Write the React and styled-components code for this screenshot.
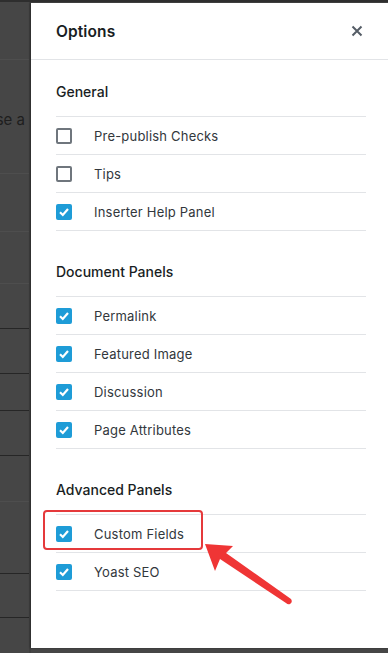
import React from 'react';
import styled, { createGlobalStyle } from 'styled-components';

const GlobalStyle = createGlobalStyle`
  html, body {
    margin: 0;
    padding: 0;
    background: #464646;
    font-family: Inter, "Noto Sans", Arial, sans-serif;
    -webkit-font-smoothing: antialiased;
  }
`;

const bgRows = [
  { h: 58, line: 'faint' },
  { h: 114, line: 'faint', text: 'Choose a' },
  { h: 58, line: 'faint' },
  { h: 52, line: 'faint' },
  { h: 45, line: 'dark' },
  { h: 45, line: 'dark' },
  { h: 37, line: 'dark' },
  { h: 45, line: 'dark' },
  { h: 46, line: 'faint' },
  { h: 72, line: 'dark' },
  { h: 44, line: 'dark' },
  { h: 40, line: 'none' },
];

const sections = [
  {
    title: 'General',
    items: [
      { label: 'Pre-publish Checks', checked: false },
      { label: 'Tips', checked: false },
      { label: 'Inserter Help Panel', checked: true },
    ],
  },
  {
    title: 'Document Panels',
    items: [
      { label: 'Permalink', checked: true },
      { label: 'Featured Image', checked: true },
      { label: 'Discussion', checked: true },
      { label: 'Page Attributes', checked: true },
    ],
  },
  {
    title: 'Advanced Panels',
    items: [
      { label: 'Custom Fields', checked: true },
      { label: 'Yoast SEO', checked: true },
    ],
  },
];

const App = () => {
  return (
    <>
      <GlobalStyle />
      <Page>
        <Backdrop>
          {bgRows.map((r, i) => (
            <BgRow key={i} $line={r.line} style={{ height: r.h }}>
              {r.text && <BgText>{r.text}</BgText>}
            </BgRow>
          ))}
        </Backdrop>
        <Modal>
          <Header>
            <Title>Options</Title>
            <CloseButton aria-label="Close">
              <svg width="12" height="12" viewBox="0 0 12 12">
                <path d="M1.5 1.5 L10.5 10.5 M10.5 1.5 L1.5 10.5" stroke="#555d66" strokeWidth="2" />
              </svg>
            </CloseButton>
          </Header>
          <Body>
            {sections.map((s) => (
              <Section key={s.title}>
                <SectionTitle>{s.title}</SectionTitle>
                <List>
                  {s.items.map((it) => (
                    <Row key={it.label}>
                      <Box $checked={it.checked}>
                        {it.checked && (
                          <svg width="12" height="12" viewBox="0 0 12 12">
                            <path d="M2 6.3 L4.8 9 L10 3" stroke="#fff" strokeWidth="2.2" fill="none" />
                          </svg>
                        )}
                      </Box>
                      <Label>{it.label}</Label>
                    </Row>
                  ))}
                </List>
              </Section>
            ))}
          </Body>
          <Highlight />
          <Arrow width="100" height="75" viewBox="0 0 100 75">
            <path d="M0 0 L28 2 L21 9 L86 55 Q88 58 85 60 Q83 61 81 59 L15 15 L10 27 Z" fill="#ef3535" />
          </Arrow>
        </Modal>
      </Page>
    </>
  );
};

const Page = styled.div`
  position: relative;
  width: 388px;
  height: 653px;
  overflow: hidden;
  background: #464646;
  border-top: 2px solid #2e2e2e;
  box-sizing: border-box;
`;

const Backdrop = styled.div`
  width: 31px;
  display: flex;
  flex-direction: column;
  border-right: 2px solid #3f3f3f;
  box-sizing: border-box;
`;

const BgRow = styled.div`
  display: flex;
  align-items: center;
  justify-content: flex-end;
  overflow: hidden;
  box-sizing: border-box;
  border-bottom: 1px solid
    ${(p) => (p.$line === 'dark' ? '#262626' : p.$line === 'faint' ? '#4e4e4e' : 'transparent')};
`;

const BgText = styled.span`
  white-space: nowrap;
  font-size: 15px;
  color: #1e1e1e;
  margin-right: 4px;
  transform: translateY(3px);
`;

const Modal = styled.div`
  position: absolute;
  left: 31px;
  top: 1px;
  right: 0;
  bottom: 5px;
  background: #fff;
  box-shadow: -1px 0 2px rgba(0, 0, 0, 0.35);
  display: flex;
  flex-direction: column;
`;

const Header = styled.div`
  height: 56px;
  display: flex;
  align-items: center;
  justify-content: space-between;
  padding: 0 25px;
  border-bottom: 1px solid #e2e4e7;
  flex-shrink: 0;
`;

const Title = styled.h1`
  margin: 0;
  font-size: 15.5px;
  font-weight: 600;
  color: #191e23;
  letter-spacing: 0.1px;
`;

const CloseButton = styled.button`
  border: 0;
  background: none;
  padding: 0;
  width: 20px;
  height: 20px;
  display: flex;
  align-items: center;
  justify-content: center;
  margin-right: -4px;
  cursor: pointer;
`;

const Body = styled.div`
  padding: 22px 22px 0 25px;
  display: flex;
  flex-direction: column;
  gap: 31px;
`;

const Section = styled.section`
  display: flex;
  flex-direction: column;
`;

const SectionTitle = styled.h2`
  margin: 0 0 14px;
  font-size: 14px;
  line-height: 20px;
  font-weight: 500;
  color: #191e23;
`;

const List = styled.div`
  display: flex;
  flex-direction: column;
  border-bottom: 1px solid #e2e4e7;
`;

const Row = styled.div`
  height: 38px;
  box-sizing: border-box;
  border-top: 1px solid #e2e4e7;
  display: flex;
  align-items: center;
  gap: 22px;
`;

const Box = styled.span`
  width: 16px;
  height: 16px;
  box-sizing: border-box;
  border-radius: 2px;
  display: flex;
  align-items: center;
  justify-content: center;
  background: ${(p) => (p.$checked ? '#1e9cd7' : '#fff')};
  border: ${(p) => (p.$checked ? '0' : '2px solid #6f767d')};
`;

const Label = styled.span`
  font-size: 13px;
  color: #32373c;
  letter-spacing: 0.2px;
`;

const Highlight = styled.div`
  position: absolute;
  left: 12px;
  top: 507px;
  width: 160px;
  height: 40px;
  box-sizing: border-box;
  border: 2.5px solid #e5393b;
  border-radius: 4px;
`;

const Arrow = styled.svg`
  position: absolute;
  left: 174px;
  top: 541px;
`;

export default App;
